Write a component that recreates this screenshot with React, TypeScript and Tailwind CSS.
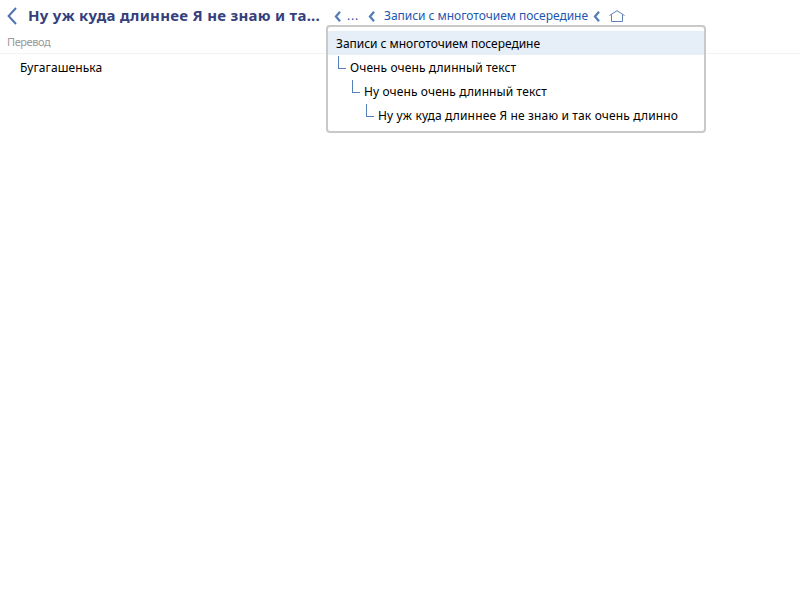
const items = [
  { text: "Записи с многоточием посередине", style: "pl-2 tracking-[-0.03px] bg-[#e6eef8]" },
  { text: "Очень очень длинный текст", style: "pl-[10px] tracking-[0.1px]" },
  { text: "Ну очень очень длинный текст", style: "pl-[24px] tracking-[0.11px]" },
  { text: "Ну уж куда длиннее Я не знаю и так очень длинно", style: "pl-[38px] tracking-[0.15px]" },
];

function Chevron() {
  return (
    <svg className="h-[11px] w-[7px] shrink-0" viewBox="0 0 7 11" fill="none" stroke="#557fb8" strokeWidth="2.3">
      <path d="M6 0.8 L2 5.5 L6 10.2" />
    </svg>
  );
}

export default function App() {
  return (
    <div className="relative h-[600px] w-[800px] overflow-hidden bg-white font-['Noto_Sans','Open_Sans',sans-serif] text-[12px] text-black">
      <header className="flex h-8 items-center whitespace-nowrap pl-[7px]">
        <svg className="h-[18px] w-[10px] shrink-0" viewBox="0 0 10 18" fill="none" stroke="#4f72b0" strokeWidth="2">
          <path d="M9 1 L1.6 9 L9 17" />
        </svg>
        <h1 className="-mt-0.5 ml-[11px] w-[306px] shrink-0 text-[15px] font-bold tracking-[0.27px] text-[#353f7b]">Ну уж куда длиннее Я не знаю и та...</h1>
        <Chevron />
        <span className="ml-[6px] w-[21px] tracking-[0.8px] text-[#1e56b0]">...</span>
        <Chevron />
        <span className="ml-[9px] w-[209px] tracking-[-0.03px] text-[#1e56b0]">Записи с многоточием посередине</span>
        <Chevron />
        <svg className="ml-[9px] h-[12px] w-[16px]" viewBox="0 0 16 12" fill="none" stroke="#5f7fb5" strokeWidth="1">
          <path d="M0.5 5.5 L8 0.7 L15.5 5.5 M2.5 4.5 V11.5 H13.5 V4.5" />
        </svg>
      </header>
      <div className="flex h-[22px] items-center border-b border-[#f3f3f3] pl-[7px] text-[11px] tracking-[-0.4px] text-[#9a9a9a]">Перевод</div>
      <div className="flex h-7 items-center pl-5 tracking-[0.08px]">Бугагашенька</div>
      <div className="absolute left-[326px] top-[25px] h-[108px] w-[380px] rounded border-2 border-[#c9c9c9] bg-white pt-1">
        {items.map((item, n) => (
          <div key={item.text} className={`flex h-6 items-center whitespace-nowrap ${item.style}`}>
            {n > 0 && <span className="-mt-[9px] mr-1 h-[13px] w-2 border-b border-l border-[#557fb8]" />}
            <span className="pt-0.5">{item.text}</span>
          </div>
        ))}
      </div>
    </div>
  );
}
